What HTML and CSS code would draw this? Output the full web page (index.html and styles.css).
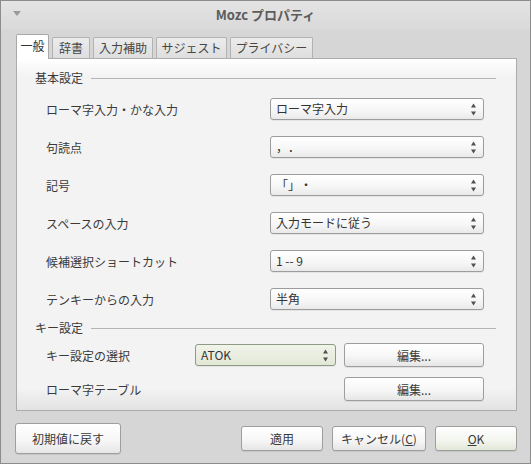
FILE: index.html
```html
<!DOCTYPE html>
<html lang="ja">
<head>
<meta charset="utf-8">
<title>Mozc プロパティ</title>
<link rel="stylesheet" href="styles.css">
</head>
<body>
<div class="window">
  <div class="titlebar">
    <span class="menu-btn"><svg width="8" height="5" viewBox="0 0 8 5"><path d="M0 0 L8 0 L4 5 Z" fill="#9a9a9a"/></svg></span>
    <span class="title">Mozc プロパティ</span>
    <span></span>
  </div>
  <div class="tabs">
    <div class="tab active t1">一般</div>
    <div class="tab t2">辞書</div>
    <div class="tab t3">入力補助</div>
    <div class="tab t4">サジェスト</div>
    <div class="tab t5">プライバシー</div>
  </div>
  <div class="panel">
    <div class="section-head"><span>基本設定</span><span class="rule"></span></div>
    <div class="rows">
      <div class="row"><span class="label">ローマ字入力・かな入力</span><div class="combo"><span>ローマ字入力</span><svg class="spin" width="7" height="13" viewBox="0 0 7 13"><path d="M3.5 0.5 L6 4.5 L1 4.5 Z M1 8.5 L6 8.5 L3.5 12.5 Z" fill="#505050"/></svg></div></div>
      <div class="row"><span class="label">句読点</span><div class="combo"><span>，．</span><svg class="spin" width="7" height="13" viewBox="0 0 7 13"><path d="M3.5 0.5 L6 4.5 L1 4.5 Z M1 8.5 L6 8.5 L3.5 12.5 Z" fill="#505050"/></svg></div></div>
      <div class="row"><span class="label">記号</span><div class="combo"><span>「」・</span><svg class="spin" width="7" height="13" viewBox="0 0 7 13"><path d="M3.5 0.5 L6 4.5 L1 4.5 Z M1 8.5 L6 8.5 L3.5 12.5 Z" fill="#505050"/></svg></div></div>
      <div class="row"><span class="label">スペースの入力</span><div class="combo"><span>入力モードに従う</span><svg class="spin" width="7" height="13" viewBox="0 0 7 13"><path d="M3.5 0.5 L6 4.5 L1 4.5 Z M1 8.5 L6 8.5 L3.5 12.5 Z" fill="#505050"/></svg></div></div>
      <div class="row"><span class="label">候補選択ショートカット</span><div class="combo"><span>1 -- 9</span><svg class="spin" width="7" height="13" viewBox="0 0 7 13"><path d="M3.5 0.5 L6 4.5 L1 4.5 Z M1 8.5 L6 8.5 L3.5 12.5 Z" fill="#505050"/></svg></div></div>
      <div class="row"><span class="label">テンキーからの入力</span><div class="combo"><span>半角</span><svg class="spin" width="7" height="13" viewBox="0 0 7 13"><path d="M3.5 0.5 L6 4.5 L1 4.5 Z M1 8.5 L6 8.5 L3.5 12.5 Z" fill="#505050"/></svg></div></div>
    </div>
    <div class="section-head second"><span>キー設定</span><span class="rule"></span></div>
    <div class="key-rows">
      <div class="key-row"><span class="label">キー設定の選択</span><div class="combo selected"><span>ATOK</span><svg class="spin" width="7" height="13" viewBox="0 0 7 13"><path d="M3.5 0.5 L6 4.5 L1 4.5 Z M1 8.5 L6 8.5 L3.5 12.5 Z" fill="#505050"/></svg></div><button class="btn edit">編集...</button></div>
      <div class="key-row"><span class="label">ローマ字テーブル</span><span></span><button class="btn edit">編集...</button></div>
    </div>
  </div>
  <div class="footer">
    <button class="btn reset">初期値に戻す</button>
    <div class="actions">
      <button class="btn apply">適用</button>
      <button class="btn cancel">キャンセル(<u>C</u>)</button>
      <button class="btn ok default"><u>O</u>K</button>
    </div>
  </div>
</div>
</body>
</html>
```

FILE: styles.css
```css
* { box-sizing: border-box; }
html, body { margin: 0; padding: 0; }
body {
  font-family: "Noto Sans CJK JP", "Noto Sans", sans-serif;
  font-size: 12px;
  color: #3a3a3a;
  background: #d6d6d6;
  text-spacing-trim: space-all;
}
.window {
  width: 531px;
  height: 464px;
  border: 1px solid #8c8c8c;
  background: #d6d6d6;
  display: flex;
  flex-direction: column;
}
.titlebar {
  height: 29px;
  display: grid;
  grid-template-columns: 30px 1fr 30px;
  align-items: center;
  background: linear-gradient(#e4e4e4, #d9d9d9);
}
.menu-btn { display: flex; justify-content: center; padding-left: 2px; margin-top: -4px; }
.title {
  text-align: center;
  font-weight: bold;
  font-size: 13px;
  color: #5c5c5c;
  margin-top: -3px;
}
.tabs {
  display: flex;
  align-items: flex-end;
  gap: 3px;
  height: 28px;
  padding-left: 15px;
  position: relative;
  z-index: 1;
}
.tab {
  height: 21px;
  padding: 0;
  text-align: center;
  line-height: 19px;
  border: 1px solid #b2b2b2;
  border-bottom: none;
  border-radius: 2px 2px 0 0;
  background: linear-gradient(#ececec, #dedede);
  color: #454545;
  white-space: nowrap;
}
.t1 { width: 33px; }
.t2 { width: 38px; }
.t3 { width: 60px; }
.t4 { width: 71px; }
.t5 { width: 83px; }
.tab.active {
  height: 25px;
  line-height: 22px;
  background: #fff;
  border-color: #a8a8a8;
  margin-bottom: -1px;
  color: #333;
}
.panel {
  margin: 0 13px 0 15px;
  height: 353px;
  border: 1px solid #acacac;
  background: linear-gradient(#ffffff 0, #f3f3f3 18px, #f3f3f3 calc(100% - 22px), #e3e3e3 100%);
  padding: 11px 20px 0 18px;
}
.section-head {
  display: flex;
  align-items: center;
  height: 16px;
  line-height: 16px;
}
.section-head .rule {
  flex: 1;
  height: 1px;
  background: #b4b4b4;
  margin-left: 8px;
}
.section-head.second { margin-top: 10px; }
.rows {
  margin-top: 12px;
  display: flex;
  flex-direction: column;
  gap: 16px;
  padding: 0 12px 0 11px;
}
.row {
  display: grid;
  grid-template-columns: 224px 1fr;
  align-items: center;
  height: 22px;
}
.combo {
  height: 22px;
  border: 1px solid #9c9c9c;
  border-radius: 3px;
  background: linear-gradient(#ffffff, #f6f6f6 60%, #e9e9e9);
  box-shadow: 0 1px 0 rgba(0,0,0,0.06);
  display: flex;
  align-items: center;
  justify-content: space-between;
  padding: 0 6px 0 5px;
  color: #333;
  line-height: 20px;
}
.combo.selected {
  background: linear-gradient(#f1f4ea, #e2e8d6);
  border-color: #8f9a84;
}
.key-rows {
  margin-top: 7px;
  display: flex;
  flex-direction: column;
  gap: 11px;
  padding: 0 12px 0 11px;
}
.key-row {
  display: grid;
  grid-template-columns: 149px 141px 1fr;
  align-items: center;
  height: 23px;
}
.key-row .btn { margin-left: 8px; }
.key-row .combo { height: 22px; }
.btn {
  font-family: inherit;
  font-size: 12px;
  color: #3a3a3a;
  border: 1px solid #9e9e9e;
  border-radius: 3px;
  background: linear-gradient(#ffffff, #f7f7f7 55%, #e6e6e6);
  box-shadow: 0 1px 0 rgba(0,0,0,0.08);
  padding: 0;
  margin: 0;
  text-spacing-trim: space-all;
}
.btn u { text-decoration: underline; }
.edit { height: 24px; }
.footer {
  flex: 1;
  display: flex;
  align-items: center;
  justify-content: space-between;
  padding: 3px 13px 0 14px;
}
.reset { width: 106px; height: 31px; }
.actions { display: flex; gap: 9px; align-items: center; }
.apply { width: 82px; height: 25px; }
.cancel { width: 94px; height: 25px; }
.ok { width: 82px; height: 25px; }
.default { background: linear-gradient(#ffffff, #f4f6f0 55%, #e2e8d8); }
```
